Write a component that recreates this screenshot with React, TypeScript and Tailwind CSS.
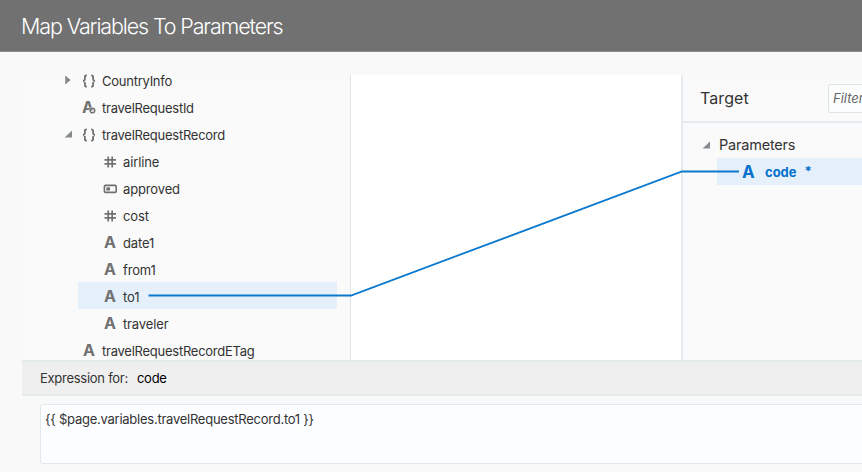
import type { ReactNode } from "react";

type Kind = "object" | "id" | "number" | "boolean" | "string";

function TypeIcon({ kind }: { kind: Kind }) {
  if (kind === "string" || kind === "id") {
    return (
      <span className="relative flex h-[14px] w-[14px] items-center justify-center text-[16px] leading-none font-bold text-[#717171]">
        <span className={kind === "id" ? "-ml-[2px]" : ""}>A</span>
        {kind === "id" && (
          <svg className="absolute top-[5px] left-[5px]" width="9" height="9" viewBox="0 0 9 9" fill="none">
            <circle cx="5.4" cy="5.5" r="3.5" fill="#fafafa" />
            <circle cx="5.4" cy="5.5" r="2.3" stroke="#717171" strokeWidth="1.5" />
            <path d="M5.4 5.5L2.6 3" stroke="#717171" strokeWidth="1.3" />
          </svg>
        )}
      </span>
    );
  }
  return (
    <svg className="relative top-px" width="14" height="14" viewBox="0 0 14 14" fill="none" stroke="#717171">
      {kind === "object" && (
        <path
          d="M4.9 1.3C3.4 1.3 2.9 1.8 2.9 3.1V5C2.9 6.2 2.4 6.8 1.1 7C2.4 7.2 2.9 7.8 2.9 9V10.9C2.9 12.2 3.4 12.7 4.9 12.7M9.1 1.3C10.6 1.3 11.1 1.8 11.1 3.1V5C11.1 6.2 11.6 6.8 12.9 7C11.6 7.2 11.1 7.8 11.1 9V10.9C11.1 12.2 10.6 12.7 9.1 12.7"
          strokeWidth="1.8"
        />
      )}
      {kind === "number" && (
        <path d="M5.2 1.4V12.4M9.2 1.4V12.4M1.5 4.9H13M1.5 8.9H13" strokeWidth="1.7" />
      )}
      {kind === "boolean" && (
        <>
          <rect x="1.4" y="3.4" width="11.8" height="7" rx="1" strokeWidth="1.6" />
          <rect x="3.4" y="5.3" width="3.6" height="3.2" fill="#717171" stroke="none" />
        </>
      )}
    </svg>
  );
}

function Arrow({ open }: { open: boolean }) {
  return (
    <svg width="10" height="10" viewBox="0 0 10 10" fill="#868b90">
      <path d={open ? "M9 1.5V8.5H1.5Z" : "M2.2 0.5L7.7 5L2.2 9.5Z"} />
    </svg>
  );
}

function Row({ kind, children, nested, open, selected }: {
  kind: Kind;
  children: ReactNode;
  nested?: boolean;
  open?: boolean;
  selected?: boolean;
}) {
  return (
    <li className={`flex h-[27px] w-[259px] shrink-0 items-center ${nested ? "pl-[25px]" : "pl-[4px]"} ${selected ? "bg-[#e5f0fb]" : ""}`}>
      {!nested && <span className="-ml-[19px] w-[19px]">{open !== undefined && <Arrow open={open} />}</span>}
      <TypeIcon kind={kind} />
      <span className={`relative top-px ml-[6px] text-[13px] leading-[20px] whitespace-nowrap ${nested ? "tracking-[-0.14px]" : "tracking-[-0.25px]"}`}>{children}</span>
    </li>
  );
}

export default function App() {
  return (
    <div className="relative flex h-[472px] w-[862px] flex-col overflow-hidden bg-[#f9f9f9] font-['Inter',sans-serif] text-[#333]">
      <header className="flex h-[52px] shrink-0 items-center border-b border-[#8b9196] bg-[#717171] pl-[21px]">
        <h1 className="relative top-px text-[21.5px] font-light tracking-[-1.13px] whitespace-nowrap text-white">Map Variables To Parameters</h1>
      </header>

      <main className="mt-[23px] ml-[22px] flex h-[285px] shrink-0">
        <section className="w-[329px] shrink-0 border-r border-[#dfe5e9] bg-[#fafafa]">
          <ul className="-mt-[9px] ml-[56px] flex flex-col pl-0">
            <Row kind="object" open={false}>CountryInfo</Row>
            <Row kind="id">travelRequestId</Row>
            <Row kind="object" open>travelRequestRecord</Row>
            <Row kind="number" nested>airline</Row>
            <Row kind="boolean" nested>approved</Row>
            <Row kind="number" nested>cost</Row>
            <Row kind="string" nested>date1</Row>
            <Row kind="string" nested>from1</Row>
            <Row kind="string" nested selected>to1</Row>
            <Row kind="string" nested>traveler</Row>
            <Row kind="string">travelRequestRecordETag</Row>
          </ul>
        </section>
        <section className="w-[330px] shrink-0 bg-white" />
        <section className="w-[181px] shrink-0 overflow-hidden border-l-2 border-[#e6ebef] bg-[#fafafa]">
          <div className="flex h-[48px] items-center border-b-2 border-[#e6ebef] pl-[17px]">
            <h2 className="w-[128px] shrink-0 text-[16px] tracking-[0.1px]">Target</h2>
            <div className="flex h-[29px] w-[150px] shrink-0 items-center rounded-[2px] border border-[#dfe4e7] bg-[#fcfdfe] pl-[4px] text-[13px] text-[#666] italic">
              <span className="relative top-px">Filter</span>
            </div>
          </div>
          <div className="mt-[8px] flex h-[27px] items-center pl-[18px]">
            <Arrow open />
            <span className="ml-[8px] text-[14.5px] tracking-[-0.2px]">Parameters</span>
          </div>
          <div className="ml-[34px] flex h-[27px] items-center bg-[#e5f0fb] pl-[25px] font-bold text-[#0572ce]">
            <span className="relative top-px w-[23px] text-[17px]">A</span>
            <span className="relative top-px text-[13px]">code</span>
            <span className="ml-[8px] text-[13px]">*</span>
          </div>
        </section>
      </main>

      <div className="ml-[22px] flex h-[36px] shrink-0 items-center border-y-2 border-[#e4e9ec] bg-[#efefef] pl-[18px] text-[13px]">
        <span className="relative top-px tracking-[-0.27px]">Expression for:</span>
        <span className="relative top-px ml-[9px] tracking-[-0.27px] text-black">code</span>
      </div>
      <div className="mt-[8px] ml-[40px] h-[60px] w-[850px] shrink-0 rounded-[2px] border border-[#e1e7ea] bg-[#fcfdff] px-[4px] pt-[4px] text-[13px] leading-[20px] tracking-[-0.25px]">
        {"{{ $page.variables.travelRequestRecord.to1 }}"}
      </div>

      <svg className="pointer-events-none absolute inset-0" width="862" height="472" fill="none">
        <path d="M148.5 295.5H351L682 171.5H739" stroke="#0b79cc" strokeWidth="1.8" />
      </svg>
    </div>
  );
}
